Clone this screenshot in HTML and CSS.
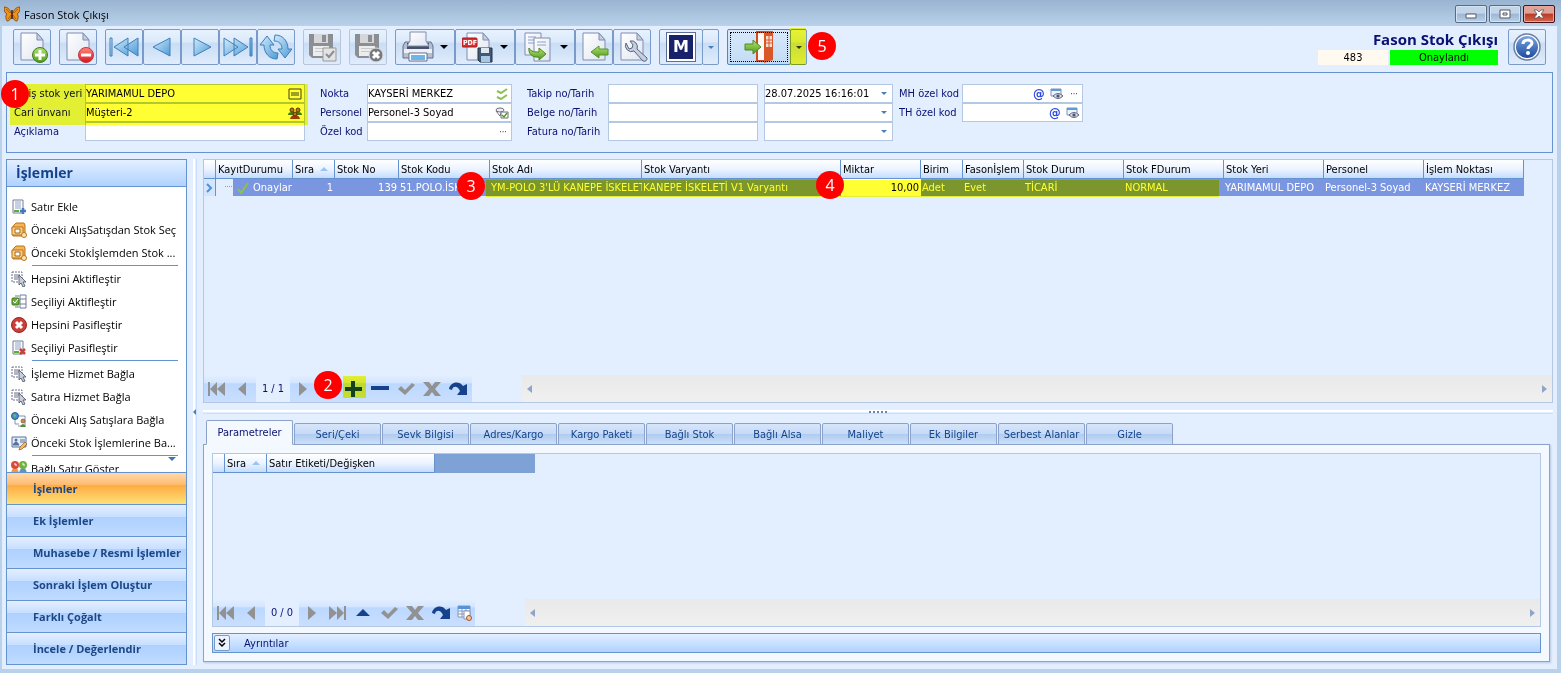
FILE: index.html
```html
<!DOCTYPE html>
<html lang="tr">
<head>
  <meta charset="UTF-8">
  <meta name="viewport" content="width=device-width, initial-scale=1.0">
  <title>Fason Stok Çıkışı</title>
  <link rel="stylesheet" href="styles.css">
</head>
<body>
  <!-- shared icons -->
  <svg class="sprite" aria-hidden="true">
    <defs>
      <linearGradient id="gBlue" x1="0" y1="0" x2="1" y2="1"><stop offset="0" stop-color="#d3ebfb"/><stop offset="1" stop-color="#4d9bd8"/></linearGradient>
      <linearGradient id="gGreen" x1="0" y1="0" x2="0" y2="1"><stop offset="0" stop-color="#b4e36e"/><stop offset="1" stop-color="#4d9a1e"/></linearGradient>
      <linearGradient id="gPage" x1="0" y1="0" x2="1" y2="1"><stop offset="0" stop-color="#fff"/><stop offset="1" stop-color="#dfe5f0"/></linearGradient>
      <linearGradient id="gRed" x1="0" y1="0" x2="0" y2="1"><stop offset="0" stop-color="#ff8a80"/><stop offset="1" stop-color="#d8141c"/></linearGradient>
      <linearGradient id="gHelp" x1="0" y1="0" x2="0" y2="1"><stop offset="0" stop-color="#7ba4e0"/><stop offset="1" stop-color="#1d4c9e"/></linearGradient>
    </defs>
    <symbol id="page" viewBox="0 0 32 32">
      <path d="M5 2h16l6 7v20H5z" fill="url(#gPage)" stroke="#7f8db0"/>
      <path d="M21 2v7h6z" fill="#c6d0e4" stroke="#7f8db0"/>
    </symbol>
    <symbol id="floppy" viewBox="0 0 32 32">
      <path d="M3 3h24v24H6l-3-3z" fill="#8b8e93"/>
      <path d="M8 3h14v9H8z" fill="#d5d7da"/><path d="M16 4h4v7h-4z" fill="#8b8e93"/>
      <path d="M7 15h16v10H7z" fill="#ededee"/><path d="M9 17h12v1H9zM9 20h12v1H9z" fill="#c9cacc"/>
    </symbol>
    <symbol id="first" viewBox="0 0 20 16"><path d="M1 1h2v14H1zM10 1v14L3 8zM18 1v14l-8-7z" fill="currentColor"/></symbol>
    <symbol id="prev" viewBox="0 0 20 16"><path d="M13 1v14L5 8z" fill="currentColor"/></symbol>
    <symbol id="next" viewBox="0 0 20 16"><path d="M6 1v14l8-7z" fill="currentColor"/></symbol>
    <symbol id="last" viewBox="0 0 20 16"><path d="M16 1h2v14h-2zM9 1v14l7-7zM1 1v14l8-7z" fill="currentColor"/></symbol>
    <symbol id="check" viewBox="0 0 20 16"><path d="M1 8l3-3 4 4 7-7 3 2L8 14z" fill="currentColor"/></symbol>
    <symbol id="cross" viewBox="0 0 20 16"><path d="M0 1h6l3 4 3-4h6l-6 7 6 7h-6l-3-4-3 4H0l6-7z" fill="currentColor"/></symbol>
    <symbol id="redo" viewBox="0 0 20 16"><path d="M0 8C1 1 10-1 14 5l4-2v11H8l3-4C9 5 4 4 3 9z" fill="currentColor"/></symbol>
    <symbol id="plus" viewBox="0 0 20 16"><path d="M6 0h4v6h7v4h-7v6H6v-6H0V6h6z" fill="currentColor"/></symbol>
    <symbol id="minus" viewBox="0 0 20 16"><path d="M0 5h18v4H0z" fill="currentColor"/></symbol>
    <symbol id="up" viewBox="0 0 20 16"><path d="M2 11l7-7 7 7z" fill="currentColor"/></symbol>
    <symbol id="box" viewBox="0 0 16 16">
      <path d="M3 3l2-2h8l1 2v9l-2 2H2L1 6z" fill="#f3b557" stroke="#bd741a"/>
      <path d="M1 5h11v8H1z" fill="#f9d189" stroke="#bd741a"/><path d="M4 7h5v4H4z" fill="#fff" stroke="#a2651a"/>
      <circle cx="13" cy="13" r="2.5" fill="#ffe6b4" stroke="#bd741a"/>
    </symbol>
    <symbol id="pick" viewBox="0 0 16 16">
      <path d="M1 1h10v10H1z" fill="none" stroke="#68718a" stroke-dasharray="2 1"/>
      <path d="M3 4h6M3 6h6M3 8h4" stroke="#68718a"/>
      <path d="M8 4v10l2-2 2 4 2-1-2-4h3z" fill="#c7cdda" stroke="#454d63" stroke-width=".8"/>
    </symbol>
    <symbol id="sheet" viewBox="0 0 16 16">
      <path d="M2 1h10v13H2z" fill="#fff" stroke="#707d9c"/>
      <path d="M4 3h6M4 5h6M4 7h6M4 9h6" stroke="#8fa2c8"/><path d="M3 11h5v2H3z" fill="#5fae2f"/>
    </symbol>
    <symbol id="view" viewBox="0 0 14 12">
      <path d="M1 1h10v7H1z" fill="#eef4fb" stroke="#7b93b8"/><path d="M1 1h10v2H1z" fill="#5c9cd8"/>
      <path d="M3 8q5-5 10 0-5 5-10 0z" fill="#d9dbe6" stroke="#5d6285"/><circle cx="8" cy="8" r="1.6" fill="#4a4f74"/>
    </symbol>
  </svg>

  <div class="window">
    <header class="titlebar">
      <svg class="logo" viewBox="0 0 16 16"><path d="M7 7C6 3 3 1 0 1c0 4 1 6 3 7-2 2-1 5 0 7 3 0 4-3 5-6 1 3 2 6 5 6 1-2 2-5 0-7 2-1 3-3 3-7-3 0-6 2-7 6z" fill="#f0921d" stroke="#7a3d05" stroke-width=".8"/><path d="M2 3l4 4M14 3l-4 4M4 13l3-4M12 13L9 9" stroke="#9a4e08" stroke-width=".7"/><path d="M8 4v9" stroke="#3c1f06" stroke-width="1.500"/></svg>
      <span class="window-title">Fason Stok Çıkışı</span>
      <div class="window-buttons">
        <button type="button" aria-label="Simge durumuna küçült"><svg viewBox="0 0 12 10"><path d="M1 5h10v4H1z" fill="#fff" stroke="#535666"/></svg></button>
        <button type="button" aria-label="Ekranı kapla"><svg viewBox="0 0 12 10"><path d="M1 1h10v8H1z" fill="#fff" stroke="#535666"/><path d="M4 4h4v2H4z" fill="none" stroke="#535666"/></svg></button>
        <button type="button" class="close" aria-label="Kapat"><svg viewBox="0 0 12 10"><path d="M1 1h3l2 2 2-2h3L8 5l3 4H8L6 7 4 9H1l3-4z" fill="#fff" stroke="#535666" stroke-width=".8"/></svg></button>
      </div>
    </header>

    <main class="content">
      <div class="toolbar">
        <div class="tool-group">
          <button type="button" class="tool" aria-label="Yeni"><svg viewBox="0 0 32 32"><use href="#page"/><circle cx="24" cy="24" r="7.500" fill="url(#gGreen)" stroke="#3f7a1a"/><path d="M24 19v10M19 24h10" stroke="#fff" stroke-width="3"/></svg></button>
        </div>
        <div class="tool-group">
          <button type="button" class="tool" aria-label="Sil"><svg viewBox="0 0 32 32"><use href="#page"/><circle cx="24" cy="24" r="7.500" fill="url(#gRed)" stroke="#c2343a"/><path d="M19 24h10" stroke="#fff" stroke-width="3"/></svg></button>
        </div>
        <div class="tool-group">
          <button type="button" class="tool" aria-label="İlk"><svg viewBox="0 0 32 32"><g fill="url(#gBlue)" stroke="#3f7fb8"><path d="M2 7h2v18H2zM20 7v18L6 16zM30 7v18l-14-9z"/></g></svg></button>
          <button type="button" class="tool" aria-label="Önceki"><svg viewBox="0 0 32 32"><path d="M24 7v18L7 16z" fill="url(#gBlue)" stroke="#3f7fb8"/></svg></button>
          <button type="button" class="tool" aria-label="Sonraki"><svg viewBox="0 0 32 32"><path d="M10 7v18l17-9z" fill="url(#gBlue)" stroke="#3f7fb8"/></svg></button>
          <button type="button" class="tool" aria-label="Son"><svg viewBox="0 0 32 32"><g fill="url(#gBlue)" stroke="#3f7fb8"><path d="M2 7v18l14-9zM12 7v18l14-9zM28 7h2v18h-2z"/></g></svg></button>
          <button type="button" class="tool" aria-label="Yenile"><svg viewBox="0 0 32 32"><g fill="url(#gBlue)" stroke="#3f7fb8"><path d="M0 14L7 5l7 9h-4c0 5 3 8 8 8l-1 6C9 28 4 22 4 14z"/><path d="M32 18l-7 9-7-9h4c0-5-3-8-8-8l1-6c8 0 13 6 13 14z"/></g></svg></button>
        </div>
        <div class="tool-group">
          <button type="button" class="tool tool-off" aria-label="Kaydet"><svg viewBox="0 0 32 32"><use href="#floppy"/><path d="M17 17h13v13H17z" fill="#e2e3e5" stroke="#999"/><path d="M20 23l3 3 5-6" fill="none" stroke="#8b8e93" stroke-width="2"/></svg></button>
        </div>
        <div class="tool-group">
          <button type="button" class="tool tool-off" aria-label="Vazgeç"><svg viewBox="0 0 32 32"><use href="#floppy"/><circle cx="24" cy="24" r="7" fill="#77797d" stroke="#dedede"/><path d="M21 21l6 6M27 21l-6 6" stroke="#fff" stroke-width="3"/></svg></button>
        </div>
        <div class="tool-group">
          <button type="button" class="tool tool-wide" aria-label="Yazdır"><svg viewBox="0 0 32 32"><path d="M3 11h26l2 4v12H1V15z" fill="#b6bfd2" stroke="#626e8d"/><path d="M5 12h22v6H5z" fill="#46506b"/><path d="M8 1h16v9l3 5H5l3-5z" fill="url(#gPage)" stroke="#7f8db0"/><path d="M2 18h28v4H2z" fill="#edf0f6"/><path d="M7 22h18v8H7z" fill="#fff" stroke="#626e8d"/><path d="M9 24h14v5H9z" fill="#6bb5e8"/></svg><span class="caret"></span></button>
          <button type="button" class="tool tool-wide" aria-label="PDF olarak kaydet"><svg viewBox="0 0 32 32"><use href="#page"/><rect x="0" y="7" width="15" height="9" rx="1" fill="#dc2f32" stroke="#a5171b"/><text x="1" y="14" class="pdf-text">PDF</text><path d="M16 17h14v14H18l-2-2z" fill="#3f5874" stroke="#253547"/><path d="M19 17h8v5h-8z" fill="#dfe7f1"/><path d="M19 25h9v6h-9z" fill="#a6c7e5"/></svg><span class="caret"></span></button>
          <button type="button" class="tool tool-wide" aria-label="Kopyala"><svg viewBox="0 0 32 32"><path d="M3 2h16v22H3z" fill="url(#gPage)" stroke="#7f8db0"/><path d="M6 6h8M6 9h8M6 12h6" stroke="#8ba0cc"/><path d="M12 7h16v23H12z" fill="url(#gPage)" stroke="#7f8db0"/><path d="M15 11h9M15 14h9" stroke="#8ba0cc"/><path d="M7 17c2 4 6 4 10 4v-4l7 6-7 6v-3c-6 1-11-3-10-9z" fill="url(#gGreen)" stroke="#4c841e"/></svg><span class="caret"></span></button>
          <button type="button" class="tool" aria-label="İçeri al"><svg viewBox="0 0 32 32"><use href="#page"/><path d="M13 21l8-6v3h9v6h-9v3z" fill="url(#gGreen)" stroke="#5a9331"/></svg></button>
          <button type="button" class="tool" aria-label="Ayarlar"><svg viewBox="0 0 32 32"><use href="#page"/><path d="M10 12a6 6 0 0 0 8 8l9 10q4 1 4-3l-10-9a6 6 0 0 0-7-8l3 4-1 3-3 1z" fill="#c6cfdf" stroke="#57647f"/></svg></button>
        </div>
        <div class="tool-group">
          <button type="button" class="tool tool-m" aria-label="M"><span class="m-logo">M</span></button>
          <button type="button" class="tool tool-drop" aria-label="M seçenekleri"><span class="caret-small"></span></button>
        </div>
        <div class="tool-group exit-group">
          <button type="button" class="tool tool-exit" aria-label="Çıkış"><svg viewBox="0 0 32 32"><path d="M14 1h8v29h-8z" fill="#fff8f4" stroke="#d24c20" stroke-width="2"/><path d="M21 0h9v29l-9 3z" fill="#d9562b"/><path d="M23 5h6v11h-6z" fill="#f8e0cd"/><path d="M26 5v11M23 9h6M23 12h6" stroke="#d9562b"/><path d="M2 13h8V9l8 7-8 7v-4H2z" fill="url(#gGreen)" stroke="#4c8a20"/></svg></button>
          <button type="button" class="tool tool-drop" aria-label="Çıkış seçenekleri"><span class="caret-small"></span></button>
          <span class="mark mark-exit"></span>
          <span class="step step-5">5</span>
        </div>
        <div class="doc-info">
          <h1>Fason Stok Çıkışı</h1>
          <div class="doc-state"><span class="doc-no">483</span><span class="doc-status">Onaylandı</span></div>
        </div>
        <button type="button" class="tool help" aria-label="Yardım"><svg viewBox="0 0 32 32"><circle cx="16" cy="16" r="13" fill="#fff" stroke="#6e7ea1" stroke-width="1.500"/><circle cx="16" cy="16" r="11" fill="url(#gHelp)"/><path d="M12 13c0-5 9-5 9-1 0 3-4 3-4 6" fill="none" stroke="#fff" stroke-width="3"/><circle cx="17" cy="22" r="2" fill="#fff"/></svg></button>
      </div>

      <form class="form-panel">
        <div class="form-col col-a">
          <label for="stokYeri">Giriş stok yeri</label>
          <div class="field"><input type="text" id="stokYeri" value="YARIMAMUL DEPO"><svg class="ico" viewBox="0 0 14 12"><path d="M1 1h12v10H1z" fill="#fff" stroke="#3d4357"/><path d="M4 4v4M6 4v4M8 4v4M10 4v4" stroke="#3d4357"/></svg></div>
          <label for="cari">Cari ünvanı</label>
          <div class="field"><input type="text" id="cari" value="Müşteri-2"><svg class="ico" viewBox="0 0 14 12"><path d="M0 8q0-3 4-3t4 3zM6 8q0-3 4-3t4 3z" fill="#3c8038"/><g fill="#b87844" stroke="#5a3216"><circle cx="4" cy="3" r="2"/><circle cx="10" cy="3" r="2"/></g><path d="M2 12q1-4 5-4t5 4z" fill="#a43a2b"/><circle cx="7" cy="7" r="2" fill="#b87844" stroke="#5a3216"/></svg></div>
          <label for="aciklama">Açıklama</label>
          <div class="field"><input type="text" id="aciklama"></div>
        </div>
        <div class="form-col col-b">
          <label for="nokta">Nokta</label>
          <div class="field"><input type="text" id="nokta" value="KAYSERİ MERKEZ"><svg class="ico" viewBox="0 0 14 12"><path d="M2 3l4 2 6-4M2 9l4 2 6-4" fill="none" stroke="#8cc152" stroke-width="2"/></svg></div>
          <label for="personel">Personel</label>
          <div class="field"><input type="text" id="personel" value="Personel-3 Soyad"><svg class="ico" viewBox="0 0 14 12"><ellipse cx="5" cy="3" rx="4" ry="2" fill="#eee" stroke="#696f82"/><path d="M1 4l4 5 1-3" fill="none" stroke="#696f82"/><path d="M6 5h7v6H6z" fill="#fff" stroke="#696f82"/><path d="M7 8l2 2 3-4" fill="none" stroke="#4c9a23" stroke-width="1.400"/></svg></div>
          <label for="ozel">Özel kod</label>
          <div class="field"><input type="text" id="ozel"><button type="button" class="dots" aria-label="Seç">···</button></div>
        </div>
        <div class="form-col col-c">
          <label for="takip">Takip no/Tarih</label>
          <div class="field"><input type="text" id="takip"></div>
          <div class="field"><select aria-label="Takip tarihi"><option>28.07.2025 16:16:01</option></select><span class="caret-small"></span></div>
          <label for="belge">Belge no/Tarih</label>
          <div class="field"><input type="text" id="belge"></div>
          <div class="field"><select aria-label="Belge tarihi"><option></option></select><span class="caret-small"></span></div>
          <label for="fatura">Fatura no/Tarih</label>
          <div class="field"><input type="text" id="fatura"></div>
          <div class="field"><select aria-label="Fatura tarihi"><option></option></select><span class="caret-small"></span></div>
        </div>
        <div class="form-col col-d">
          <label for="mh">MH özel kod</label>
          <div class="field"><input type="text" id="mh"><span class="at">@</span><svg class="ico" viewBox="0 0 14 12"><use href="#view"/></svg><button type="button" class="dots" aria-label="Seç">···</button></div>
          <label for="th">TH özel kod</label>
          <div class="field"><input type="text" id="th"><span class="at">@</span><svg class="ico" viewBox="0 0 14 12"><use href="#view"/></svg></div>
        </div>
        <span class="mark mark-form"></span>
        <span class="step step-1">1</span>
      </form>

      <div class="workspace">
        <aside class="sidebar">
          <h2>İşlemler</h2>
          <ul class="actions">
            <li><a href="#"><svg viewBox="0 0 16 16"><use href="#sheet"/><path d="M12 9v6M9 12h6" stroke="#4679b8" stroke-width="2.500"/></svg><span>Satır Ekle</span></a></li>
            <li><a href="#"><svg><use href="#box"/></svg><span>Önceki AlışSatışdan Stok Seç</span></a></li>
            <li><a href="#"><svg><use href="#box"/></svg><span>Önceki Stokİşlemden Stok ...</span></a></li>
            <li class="line"></li>
            <li><a href="#"><svg><use href="#pick"/></svg><span>Hepsini Aktifleştir</span></a></li>
            <li><a href="#"><svg viewBox="0 0 16 16"><path d="M9 1h6v13H9zM9 5h6M9 10h6" fill="#fff" stroke="#707d9c"/><path d="M4 2h4M4 13h4" stroke="#707d9c"/><rect x="1" y="4" width="7" height="7" rx="1" fill="#69ae37" stroke="#3d7719"/><path d="M2 7l2 2 3-4" fill="none" stroke="#fff"/></svg><span>Seçiliyi Aktifleştir</span></a></li>
            <li><a href="#"><svg viewBox="0 0 16 16"><circle cx="8" cy="8" r="7.500" fill="#c9403a" stroke="#9b2220"/><path d="M5 5l6 6M11 5l-6 6" stroke="#fff" stroke-width="3"/></svg><span>Hepsini Pasifleştir</span></a></li>
            <li><a href="#"><svg viewBox="0 0 16 16"><use href="#sheet"/><path d="M9 9l5 5M14 9l-5 5" stroke="#c9403a" stroke-width="2.500"/></svg><span>Seçiliyi Pasifleştir</span></a></li>
            <li class="line"></li>
            <li><a href="#"><svg><use href="#pick"/></svg><span>İşleme Hizmet Bağla</span></a></li>
            <li><a href="#"><svg><use href="#pick"/></svg><span>Satıra Hizmet Bağla</span></a></li>
            <li><a href="#"><svg viewBox="0 0 16 16"><circle cx="4" cy="4" r="3.500" fill="#3f8fd2" stroke="#2a5f91"/><path d="M2 2l3 1-1 3z" fill="#79c14a"/><path d="M8 4h6v10H7" fill="#fff" stroke="#8291ad"/><path d="M4 8v4h4" fill="none" stroke="#8291ad"/><circle cx="12" cy="9" r="2" fill="#c68a52" stroke="#6b4220" stroke-width=".6"/><path d="M9 15q3-6 6 0z" fill="#568b3a"/></svg><span>Önceki Alış Satışlara Bağla</span></a></li>
            <li><a href="#"><svg viewBox="0 0 16 16"><path d="M1 2h14v10H1z" fill="#e7effb" stroke="#57719f"/><circle cx="5" cy="5" r="1.500" fill="#57719f"/><path d="M2 10q3-6 6 0zM9 5h5M9 7h5" fill="#57719f" stroke="#57719f"/><path d="M14 7L9 12l-1 3 3-1 5-5z" fill="#f5bd61" stroke="#8b5b22" stroke-width=".7"/></svg><span>Önceki Stok İşlemlerine Ba...</span></a></li>
            <li class="line"></li>
            <li><a href="#"><svg viewBox="0 0 16 16"><path d="M0 15q0-8 4-8t4 8z" fill="#e99a3c"/><path d="M8 15q0-8 4-8t4 8z" fill="#5b93c9"/><circle cx="4" cy="4" r="4" fill="#dd4b36"/><circle cx="12" cy="4" r="4" fill="#6eb43e"/><path d="M3 3h2v2M11 3h2v2" fill="none" stroke="#fff"/></svg><span>Bağlı Satır Göster</span></a></li>
          </ul>
          <span class="more"></span>
          <nav class="groups">
            <button type="button" class="active">İşlemler</button>
            <button type="button">Ek İşlemler</button>
            <button type="button">Muhasebe / Resmi İşlemler</button>
            <button type="button">Sonraki İşlem Oluştur</button>
            <button type="button">Farklı Çoğalt</button>
            <button type="button">İncele / Değerlendir</button>
          </nav>
        </aside>
        <div class="splitter-v"><span></span></div>

        <div class="panes">
          <section class="grid-pane">
            <table class="grid">
              <colgroup><col class="w-ind"><col class="w-kayit"><col class="w-sira"><col class="w-no"><col class="w-kod"><col class="w-ad"><col class="w-var"><col class="w-mik"><col class="w-birim"><col class="w-fason"><col class="w-std"><col class="w-std"><col class="w-std"><col class="w-std"><col class="w-std"></colgroup>
              <thead>
                <tr><th></th><th>KayıtDurumu</th><th class="sorted">Sıra</th><th>Stok No</th><th>Stok Kodu</th><th>Stok Adı</th><th>Stok Varyantı</th><th>Miktar</th><th>Birim</th><th>Fasonİşlem</th><th>Stok Durum</th><th>Stok FDurum</th><th>Stok Yeri</th><th>Personel</th><th>İşlem Noktası</th></tr>
              </thead>
              <tbody>
                <tr><td class="pointer"><svg viewBox="0 0 8 10"><path d="M2 1l4 4-4 4" fill="none" stroke="#4f91d8" stroke-width="2"/></svg></td><td class="state-cell"><div class="state"><span class="tree"></span><svg viewBox="0 0 12 12"><path d="M1 7l3 4 7-10" fill="none" stroke="#8cc43c" stroke-width="2"/></svg>Onaylandı</div></td><td class="num">1</td><td class="num">139</td><td>51.POLO.İSKELET</td><td>YM-POLO 3'LÜ KANEPE İSKELETİ</td><td>KANEPE İSKELETİ V1 Varyantı</td><td class="num edit">10,00</td><td>Adet</td><td>Evet</td><td>TİCARİ</td><td>NORMAL</td><td>YARIMAMUL DEPO</td><td>Personel-3 Soyad</td><td>KAYSERİ MERKEZ</td></tr>
              </tbody>
            </table>
            <span class="mark mark-row"></span>
            <span class="step step-3">3</span>
            <span class="step step-4">4</span>
            <div class="grid-foot">
              <div class="navigator">
                <button type="button" aria-label="İlk"><svg><use href="#first"/></svg></button>
                <button type="button" aria-label="Önceki"><svg><use href="#prev"/></svg></button>
                <span class="pos">1 / 1</span>
                <button type="button" aria-label="Sonraki"><svg><use href="#next"/></svg></button>
                <button type="button" aria-label="Son"><svg><use href="#last"/></svg></button>
                <button type="button" class="on" aria-label="Ekle"><svg><use href="#plus"/></svg></button>
                <button type="button" class="on" aria-label="Çıkar"><svg><use href="#minus"/></svg></button>
                <button type="button" aria-label="Onayla"><svg><use href="#check"/></svg></button>
                <button type="button" aria-label="Vazgeç"><svg><use href="#cross"/></svg></button>
                <button type="button" class="on" aria-label="Yenile"><svg><use href="#redo"/></svg></button>
                <span class="mark mark-plus"></span>
                <span class="step step-2">2</span>
              </div>
              <div class="scrollbar"><span class="arrow-left"></span><span class="arrow-right"></span></div>
            </div>
          </section>
          <div class="splitter-h"><span></span></div>

          <section class="detail-pane">
            <div class="tabs" role="tablist">
              <button type="button" role="tab" class="selected">Parametreler</button>
              <button type="button" role="tab">Seri/Çeki</button>
              <button type="button" role="tab">Sevk Bilgisi</button>
              <button type="button" role="tab">Adres/Kargo</button>
              <button type="button" role="tab">Kargo Paketi</button>
              <button type="button" role="tab">Bağlı Stok</button>
              <button type="button" role="tab">Bağlı Alsa</button>
              <button type="button" role="tab">Maliyet</button>
              <button type="button" role="tab">Ek Bilgiler</button>
              <button type="button" role="tab">Serbest Alanlar</button>
              <button type="button" role="tab">Gizle</button>
            </div>
            <div class="tab-page">
              <div class="param-grid">
                <table class="grid params">
                  <colgroup><col class="w-ind"><col class="w-sira"><col class="w-label"><col class="w-std"></colgroup>
                  <thead><tr><th></th><th class="sorted">Sıra</th><th>Satır Etiketi/Değişken</th><th class="blank"></th></tr></thead>
                </table>
                <div class="grid-foot">
                  <div class="navigator">
                    <button type="button" aria-label="İlk"><svg><use href="#first"/></svg></button>
                    <button type="button" aria-label="Önceki"><svg><use href="#prev"/></svg></button>
                    <span class="pos">0 / 0</span>
                    <button type="button" aria-label="Sonraki"><svg><use href="#next"/></svg></button>
                    <button type="button" aria-label="Son"><svg><use href="#last"/></svg></button>
                    <button type="button" class="on" aria-label="Yukarı"><svg><use href="#up"/></svg></button>
                    <button type="button" aria-label="Onayla"><svg><use href="#check"/></svg></button>
                    <button type="button" aria-label="Vazgeç"><svg><use href="#cross"/></svg></button>
                    <button type="button" class="on" aria-label="Yenile"><svg><use href="#redo"/></svg></button>
                    <button type="button" class="last-btn" aria-label="Tablo ayarı"><svg viewBox="0 0 20 16"><path d="M3 1h12v11H3zM3 6h12M3 9h12M7 4v8M11 4v8" fill="#fff" stroke="#8496b8"/><path d="M3 1h12v3H3z" fill="#5593d4"/><path d="M9 6h6v8H9z" fill="#fff" stroke="#8496b8"/><circle cx="14" cy="13" r="2.500" fill="#f4c59b" stroke="#a5562a"/></svg></button>
                  </div>
                  <div class="scrollbar"><span class="arrow-left"></span><span class="arrow-right"></span></div>
                </div>
              </div>
              <div class="details-bar">
                <button type="button" aria-label="Ayrıntıları aç"><svg viewBox="0 0 10 10"><path d="M2 1l3 3 3-3M2 5l3 3 3-3" fill="none" stroke="#000" stroke-width="1.500"/></svg></button>
                <span>Ayrıntılar</span>
              </div>
            </div>
          </section>
        </div>
      </div>
    </main>
  </div>
</body>
</html>
```

FILE: styles.css
```css
* {
  box-sizing: border-box;
}
body {
  margin: 0;
  font-family: "DejaVu Sans Condensed", "DejaVu Sans", sans-serif;
  font-size: 11px;
  color: #000;
}
button, input, select {
  font: inherit;
  color: inherit;
  margin: 0;
  padding: 0;
}
button {
  cursor: pointer;
}
.sprite {
  position: absolute;
  width: 0;
  height: 0;
}

/* window frame */
.window {
  display: flex;
  flex-direction: column;
  height: 100vh;
  min-height: 600px;
  padding: 0 4px 4px 2px;
  background: #b9d1ea;
  overflow: hidden;
}
.titlebar {
  display: flex;
  align-items: center;
  flex: none;
  height: 26px;
  margin: 0 -4px 0 -2px;
  padding: 2px 6px 0 4px;
  background: linear-gradient(#99b4d1, #b9d1ea);
}
.logo {
  width: 16px;
  height: 16px;
  margin-right: 4px;
}
.window-title {
  flex: 1;
  font-family: "Open Sans", sans-serif;
  font-size: 11px;
}
.window-buttons {
  display: flex;
  gap: 2px;
}
.window-buttons button {
  display: flex;
  align-items: center;
  justify-content: center;
  width: 32px;
  height: 18px;
  border: 1px solid #5a6c85;
  border-radius: 2px;
  background: linear-gradient(#c3d5e9 45%, #9db7d4 50%, #b9d2ea);
  box-shadow: inset 0 0 0 1px #d5e4f3;
}
.window-buttons .close {
  border-color: #4b1117;
  background: linear-gradient(#e0a197 45%, #b83a22 50%, #d3684f);
  box-shadow: inset 0 0 0 1px #e5a89e;
}
.window-buttons svg {
  width: 12px;
  height: 10px;
}
.content {
  display: flex;
  flex-direction: column;
  flex: 1;
  min-height: 0;
  padding: 3px 4px 4px;
  background: #e3efff;
}

/* toolbar */
.toolbar {
  display: flex;
  align-items: flex-start;
  gap: 8px;
  height: 43px;
  padding: 0 7px;
}
.tool-group {
  display: flex;
  position: relative;
}
.tool {
  display: flex;
  align-items: center;
  justify-content: center;
  width: 38px;
  height: 36px;
  border: 1px solid #7a9bc8;
  border-radius: 2px;
  background: linear-gradient(#e8f2ff, #dbe9fa 35%, #c9ddf5 40%, #dfecfc);
}
.tool svg {
  width: 32px;
  height: 32px;
}
.tool-off {
  border-color: #b9c6da;
}
.tool-wide {
  width: 60px;
  gap: 6px;
}
.caret {
  border: 4px solid transparent;
  border-top-color: #000;
  border-bottom: 0;
}
.caret-small {
  border: 3px solid transparent;
  border-top-color: #4a7ebb;
  border-bottom: 0;
}
.pdf-text {
  font-size: 7px;
  font-weight: bold;
  fill: #fff;
}
.tool-m {
  width: 44px;
}
.m-logo {
  width: 30px;
  height: 30px;
  border: 1px solid #5b6e9c;
  box-shadow: inset 0 0 0 2px #fff;
  background: #17226b;
  color: #fff;
  font: bold 16px/28px "DejaVu Sans", sans-serif;
}
.tool-drop {
  width: 17px;
  margin-left: -1px;
}
.tool-exit {
  width: 64px;
  border-color: #4f86c0;
  background: linear-gradient(#d8e9fb, #c2dcf5);
  outline: 1px dotted #000;
  outline-offset: -4px;
}
.exit-group .caret-small {
  border-top-color: #333;
}
.doc-info {
  flex: 1;
  text-align: right;
}
.doc-info h1 {
  margin: 0;
  font: bold 15px/21px "Open Sans", sans-serif;
  color: #0a1172;
}
.doc-state {
  display: flex;
  justify-content: flex-end;
  gap: 2px;
  line-height: 15px;
  text-align: center;
}
.doc-no {
  width: 70px;
  background: #fffaf0;
}
.doc-status {
  width: 108px;
  background: #0f0;
}
.help {
  margin-left: 2px;
}

/* document fields */
.form-panel {
  display: flex;
  position: relative;
  align-items: flex-start;
  flex: none;
  gap: 15px;
  padding: 11px 7px;
  border: 1px solid #6593cf;
  color: #0a1172;
}
.form-col {
  display: grid;
  grid-auto-rows: 19px;
  align-items: center;
}
.col-a {
  grid-template-columns: 71px 220px;
}
.col-b {
  grid-template-columns: 47px 145px;
}
.col-c {
  grid-template-columns: 81px 150px 129px;
}
.col-c .field:nth-child(3n) {
  margin-left: 6px;
  margin-right: -6px;
}
.col-d {
  grid-template-columns: 63px 121px;
  margin-left: -3px;
}
.form-col label {
  white-space: nowrap;
}
.field {
  display: flex;
  align-items: center;
  height: 19px;
  padding-right: 2px;
  border: 1px solid #b4c8e4;
  background: #fff;
  color: #000;
}
.field input, .field select {
  flex: 1;
  width: 0;
  min-width: 0;
  height: 17px;
  border: 0;
  background: none;
  appearance: none;
}
.field .caret-small {
  margin-right: 3px;
}
.ico {
  flex: none;
  width: 14px;
  height: 12px;
  margin-left: 4px;
}
.dots {
  width: 12px;
  margin-left: 4px;
  border: 0;
  background: none;
  color: #446;
  font-size: 9px;
}
.at {
  width: 13px;
  font-size: 13px;
  line-height: 15px;
  font-weight: bold;
  color: #2a48e0;
}

/* numbered steps and highlights lying over the screen */
.step {
  position: absolute;
  z-index: 3;
  width: 28px;
  height: 28px;
  border-radius: 50%;
  background: #f00;
  color: #fff;
  font: 16px/28px "Open Sans", sans-serif;
  text-align: center;
}
.mark {
  position: absolute;
  z-index: 2;
  background: #ff3;
  mix-blend-mode: multiply;
  pointer-events: none;
}
.step-1 {
  left: -6px;
  top: 7px;
}
.step-2 {
  left: 110px;
  top: -4px;
}
.step-3 {
  left: 253px;
  top: 12px;
}
.step-4 {
  left: 612px;
  top: 11px;
}
.step-5 {
  left: 81px;
  top: 3px;
}
.mark-form {
  left: 3px;
  top: 11px;
  width: 298px;
  height: 41px;
}
.mark-exit {
  left: 63px;
  top: -1px;
  width: 16px;
  height: 37px;
}
.mark-row {
  left: 282px;
  top: 20px;
  width: 733px;
  height: 17px;
}
.mark-plus {
  left: 139px;
  top: 1px;
  width: 23px;
  height: 22px;
}

/* left menu */
.workspace {
  display: flex;
  flex: 1;
  min-height: 0;
  margin-top: 6px;
}
.sidebar {
  display: flex;
  position: relative;
  flex: none;
  flex-direction: column;
  width: 181px;
  border: 1px solid #6593cf;
  background: #fff;
  font-family: "Open Sans", sans-serif;
}
.sidebar h2 {
  flex: none;
  margin: 0;
  padding-left: 9px;
  border-bottom: 1px solid #6593cf;
  background: linear-gradient(#e3efff, #afd2ff);
  font-size: 14px;
  line-height: 26px;
  color: #15428b;
}
.actions {
  flex: 1;
  min-height: 0;
  margin: 0;
  padding: 8px 0 0 4px;
  overflow: hidden;
  list-style: none;
}
.actions a {
  display: flex;
  align-items: center;
  gap: 4px;
  height: 23px;
  color: #000;
  text-decoration: none;
  white-space: nowrap;
}
.actions svg {
  flex: none;
  width: 16px;
  height: 16px;
}
.actions .line {
  height: 3px;
  margin: 0 8px 0 21px;
  background: linear-gradient(#6593cf, #6593cf) center / 100% 1px no-repeat;
}
.more {
  position: absolute;
  right: 10px;
  bottom: 203px;
  border: 4px solid transparent;
  border-top-color: #3f74bd;
  border-bottom: 0;
}
.groups {
  flex: none;
}
.groups button {
  display: block;
  width: 100%;
  height: 32px;
  padding-left: 26px;
  border: 0;
  border-top: 1px solid #6593cf;
  background: linear-gradient(#e3efff, #c8dfff 38%, #add1ff 39%, #c0dbff);
  color: #1f4785;
  font-weight: bold;
  text-align: left;
  white-space: nowrap;
}
.groups .active {
  background: linear-gradient(#ffd9aa, #ffbb6e 38%, #ffab3f 39%, #fee17a);
}
.splitter-v {
  display: flex;
  align-items: center;
  flex: none;
  width: 16px;
  background: linear-gradient(#fff, #fff) 6px 0 / 2px 100% no-repeat, linear-gradient(#c9dfff, #c9dfff) 9px 0 / 1px 100% no-repeat;
}
.splitter-v span {
  margin-left: 6px;
  border: 3px solid transparent;
  border-right-color: #4a7ebb;
  border-left: 0;
}

/* grids */
.panes {
  display: flex;
  flex: 1;
  flex-direction: column;
  min-width: 0;
  padding-bottom: 3px;
}
.grid-pane {
  display: flex;
  position: relative;
  flex: 1;
  flex-direction: column;
  justify-content: space-between;
  min-height: 0;
  border: 1px solid #b4c8e4;
}
.grid {
  width: 1320px;
  border-collapse: separate;
  border-spacing: 0;
  table-layout: fixed;
}
.params {
  width: 322px;
}
.w-ind { width: 12px; }
.w-kayit { width: 77px; }
.w-sira { width: 42px; }
.w-no { width: 64px; }
.w-kod { width: 91px; }
.w-ad { width: 152px; }
.w-var { width: 199px; }
.w-mik { width: 80px; }
.w-birim { width: 42px; }
.w-fason { width: 61px; }
.w-std { width: 100px; }
.w-label { width: 168px; }
.grid th, .grid td {
  padding: 0 1px 0 2px;
  overflow: hidden;
  white-space: nowrap;
  text-align: left;
}
.grid th {
  height: 19px;
  border-right: 1px solid #6593cf;
  border-bottom: 1px solid #6593cf;
  background: linear-gradient(#fff, #ecf4ff 50%, #c4dcff);
  font-weight: normal;
}
.grid .sorted::after {
  content: "";
  display: inline-block;
  margin: 0 0 2px 6px;
  border: 4px solid transparent;
  border-top: 0;
  border-bottom-color: #99c3fb;
}
.grid .blank {
  border-color: #7ea2d6;
  background: #7ea2d6;
}
.grid td {
  height: 17px;
  padding-left: 1px;
  background: #7b96e0;
  color: #fff;
}
.grid .num {
  padding-right: 2px;
  text-align: right;
}
.grid .edit {
  background: #fff;
  color: #000;
}
.grid .pointer {
  border-right: 1px solid #6593cf;
  background: #d3e5ff;
}
.grid .state-cell {
  padding: 0 1px 0 0;
}
.pointer svg {
  display: block;
  width: 8px;
  height: 10px;
}
.state {
  display: flex;
  align-items: center;
  gap: 4px;
  overflow: hidden;
}
.state svg {
  flex: none;
  width: 12px;
  height: 12px;
}
.tree {
  flex: none;
  width: 17px;
  height: 17px;
  background: repeating-linear-gradient(90deg, #8aa0c0 0 1px, #e3efff 1px 2px) 9px 7px / 8px 1px no-repeat, #e3efff;
}
.grid-foot {
  display: flex;
  gap: 50px;
  height: 27px;
}
.navigator {
  display: flex;
  position: relative;
  background: linear-gradient(#e3efff, #d3e5ff 30%, #bcd8ff 32%, #c9dfff);
}
.navigator button {
  display: flex;
  align-items: center;
  justify-content: center;
  width: 26px;
  border: 0;
  background: none;
  color: #929292;
}
.navigator .on {
  color: #15428b;
}
.navigator svg {
  width: 20px;
  height: 16px;
}
.navigator .last-btn {
  width: 20px;
}
.pos {
  width: 34px;
  background: #e3efff;
  color: #0a1172;
  line-height: 27px;
  text-align: center;
}
.scrollbar {
  display: flex;
  flex: 1;
  align-items: center;
  justify-content: space-between;
  padding: 0 5px;
  background: linear-gradient(#e9e9ea, #f0f0f0);
}
.arrow-left, .arrow-right {
  border: 4px solid transparent;
}
.arrow-left {
  border-right: 5px solid #8fa4c6;
  border-left: 0;
}
.arrow-right {
  border-left: 5px solid #8fa4c6;
  border-right: 0;
}
.splitter-h {
  display: flex;
  justify-content: center;
  flex: none;
  height: 17px;
  padding-top: 8px;
  background: linear-gradient(#fff, #fff) 0 7px / 100% 2px no-repeat, linear-gradient(#c9dfff, #c9dfff) 0 10px / 100% 1px no-repeat;
}
.splitter-h span {
  width: 18px;
  height: 2px;
  background: repeating-linear-gradient(90deg, #6b86ad 0 2px, #fff 2px 4px);
}

/* detail tabs */
.detail-pane {
  display: flex;
  flex: 1;
  flex-direction: column;
  min-height: 0;
}
.tabs {
  display: flex;
  align-items: flex-end;
  gap: 1px;
  flex: none;
  height: 25px;
  margin-bottom: -1px;
  padding-left: 3px;
  z-index: 1;
}
.tabs button {
  width: 87px;
  height: 22px;
  border: 1px solid #8ba3cb;
  border-radius: 2px 2px 0 0;
  background: linear-gradient(#d6e5fa, #c7dbf6 48%, #b0cbf0 50%, #cbdff9);
  color: #15428b;
  white-space: nowrap;
}
.tabs .selected {
  height: 25px;
  border-bottom-color: #f4f8ff;
  background: #f4f8ff;
  color: #0a1172;
}
.tab-page {
  display: flex;
  flex: 1;
  flex-direction: column;
  gap: 6px;
  min-height: 0;
  margin-right: 3px;
  padding: 8px;
  border: 1px solid #8ba3cb;
  background: #f4f8ff;
  box-shadow: 1px 1px 2px #b4c8e4;
}
.param-grid {
  display: flex;
  flex: 1;
  flex-direction: column;
  justify-content: space-between;
  min-height: 0;
  border: 1px solid #b4c8e4;
  background: #e3efff;
}
.details-bar {
  display: flex;
  align-items: center;
  flex: none;
  gap: 14px;
  height: 20px;
  padding-left: 1px;
  border: 1px solid #6593cf;
  background: linear-gradient(#e3efff, #afd2ff);
  color: #0a1172;
}
.details-bar button {
  display: flex;
  align-items: center;
  justify-content: center;
  width: 16px;
  height: 16px;
  border: 1px solid #7a9bc8;
  border-radius: 2px;
  background: #eaf3ff;
}
.details-bar svg {
  width: 10px;
  height: 10px;
}
```
